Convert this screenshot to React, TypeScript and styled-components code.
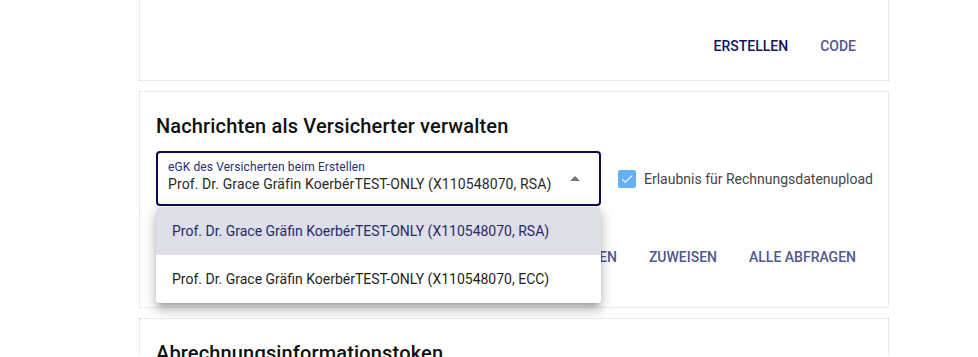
import React from 'react';
import styled, { createGlobalStyle } from 'styled-components';

const GlobalStyle = createGlobalStyle`
  html, body {
    margin: 0;
    padding: 0;
    background: #fff;
    font-family: Roboto, 'Liberation Sans', sans-serif;
    overflow: hidden;
  }
`;

const Page = styled.div`
  width: 750px;
  padding-left: 139px;
  margin-top: -10px;
  display: flex;
  flex-direction: column;
  gap: 10px;
`;

const Card = styled.section<{ $bottom?: number }>`
  border: 1px dotted #d6d6d6;
  padding: 16px 16px ${(p) => p.$bottom ?? 16}px;
  display: flex;
  flex-direction: column;
`;

const Title = styled.h2`
  margin: 2px 0 0;
  font-size: 20px;
  font-weight: 500;
  line-height: 32px;
  color: #111;
  letter-spacing: 0.15px;
`;

const Actions = styled.div<{ $top?: number }>`
  display: flex;
  justify-content: flex-end;
  margin-top: ${(p) => p.$top ?? 0}px;
`;

const TextButton = styled.button<{ $strong?: boolean }>`
  border: 0;
  background: none;
  font-family: Roboto, 'Liberation Sans', sans-serif;
  font-size: 14px;
  font-weight: 500;
  letter-spacing: 0;
  text-transform: uppercase;
  line-height: 24px;
  padding: 6px 16px;
  color: ${(p) => (p.$strong ? '#13145a' : '#51578f')};
  cursor: pointer;
`;

const FormRow = styled.div`
  display: flex;
  align-items: center;
  margin-top: 9px;
  gap: 17px;
`;

const SelectWrap = styled.div`
  position: relative;
  width: 445px;
  flex-shrink: 0;
`;

const SelectBox = styled.div`
  box-sizing: border-box;
  height: 55px;
  border: 2px solid #0c0c4e;
  border-radius: 4px;
  padding: 6px 40px 0 10px;
  position: relative;
`;

const SelectLabel = styled.div`
  font-size: 12px;
  line-height: 16px;
  color: #2b2f78;
  letter-spacing: 0.1px;
`;

const SelectValue = styled.div`
  font-size: 14px;
  line-height: 18px;
  color: #2a2a2a;
  white-space: nowrap;
  letter-spacing: 0.1px;
`;

const Arrow = styled.svg`
  position: absolute;
  right: 12px;
  top: 14px;
`;

const Menu = styled.ul`
  position: absolute;
  left: 0;
  right: 0;
  top: 56px;
  margin: 0;
  padding: 0;
  list-style: none;
  background: #fff;
  border-radius: 4px;
  overflow: hidden;
  box-shadow: 0 5px 5px -3px rgba(0, 0, 0, 0.2), 0 8px 10px 1px rgba(0, 0, 0, 0.14),
    0 3px 14px 2px rgba(0, 0, 0, 0.12);
  z-index: 10;
`;

const MenuItem = styled.li<{ $selected?: boolean }>`
  height: 48px;
  display: flex;
  align-items: center;
  padding: 0 16px;
  font-size: 14px;
  letter-spacing: 0;
  white-space: nowrap;
  background: ${(p) => (p.$selected ? '#dfdfe8' : '#fff')};
  color: ${(p) => (p.$selected ? '#262a6b' : '#1f1f1f')};
`;

const CheckLabel = styled.label`
  display: flex;
  align-items: center;
  gap: 8px;
  font-size: 14px;
  color: #454545;
  letter-spacing: 0;
  white-space: nowrap;
`;

const CheckBox = styled.span`
  width: 18px;
  height: 18px;
  border-radius: 2px;
  background: #66aff5;
  display: flex;
  align-items: center;
  justify-content: center;
`;

const Spacer = styled.div<{ $h: number }>`
  height: ${(p) => p.$h}px;
`;

const options = [
  'Prof. Dr. Grace Gräfin KoerbérTEST-ONLY (X110548070, RSA)',
  'Prof. Dr. Grace Gräfin KoerbérTEST-ONLY (X110548070, ECC)',
];

export default function App() {
  return (
    <>
      <GlobalStyle />
      <Page>
        <Card>
          <Spacer $h={21} />
          <Actions>
            <TextButton $strong>Erstellen</TextButton>
            <TextButton>Code</TextButton>
          </Actions>
        </Card>

        <Card $bottom={32}>
          <Title>Nachrichten als Versicherter verwalten</Title>
          <FormRow>
            <SelectWrap>
              <SelectBox>
                <SelectLabel>eGK des Versicherten beim Erstellen</SelectLabel>
                <SelectValue>{options[0]}</SelectValue>
                <Arrow width="24" height="24" viewBox="0 0 24 24">
                  <path d="M7 14l5-5 5 5z" fill="#757575" />
                </Arrow>
              </SelectBox>
              <Menu>
                {options.map((o, i) => (
                  <MenuItem key={o} $selected={i === 0}>
                    {o}
                  </MenuItem>
                ))}
              </Menu>
            </SelectWrap>
            <CheckLabel>
              <CheckBox>
                <svg width="14" height="14" viewBox="0 0 24 24">
                  <path d="M9 16.2 4.8 12l-1.4 1.4L9 19 21 7l-1.4-1.4z" fill="#fff" />
                </svg>
              </CheckBox>
              Erlaubnis für Rechnungsdatenupload
            </CheckLabel>
          </FormRow>
          <Actions $top={33}>
            <TextButton>Abrufen</TextButton>
            <TextButton>Zuweisen</TextButton>
            <TextButton>Alle Abfragen</TextButton>
          </Actions>
        </Card>

        <Card>
          <Title>Abrechnungsinformationstoken</Title>
          <Spacer $h={80} />
        </Card>
      </Page>
    </>
  );
}
